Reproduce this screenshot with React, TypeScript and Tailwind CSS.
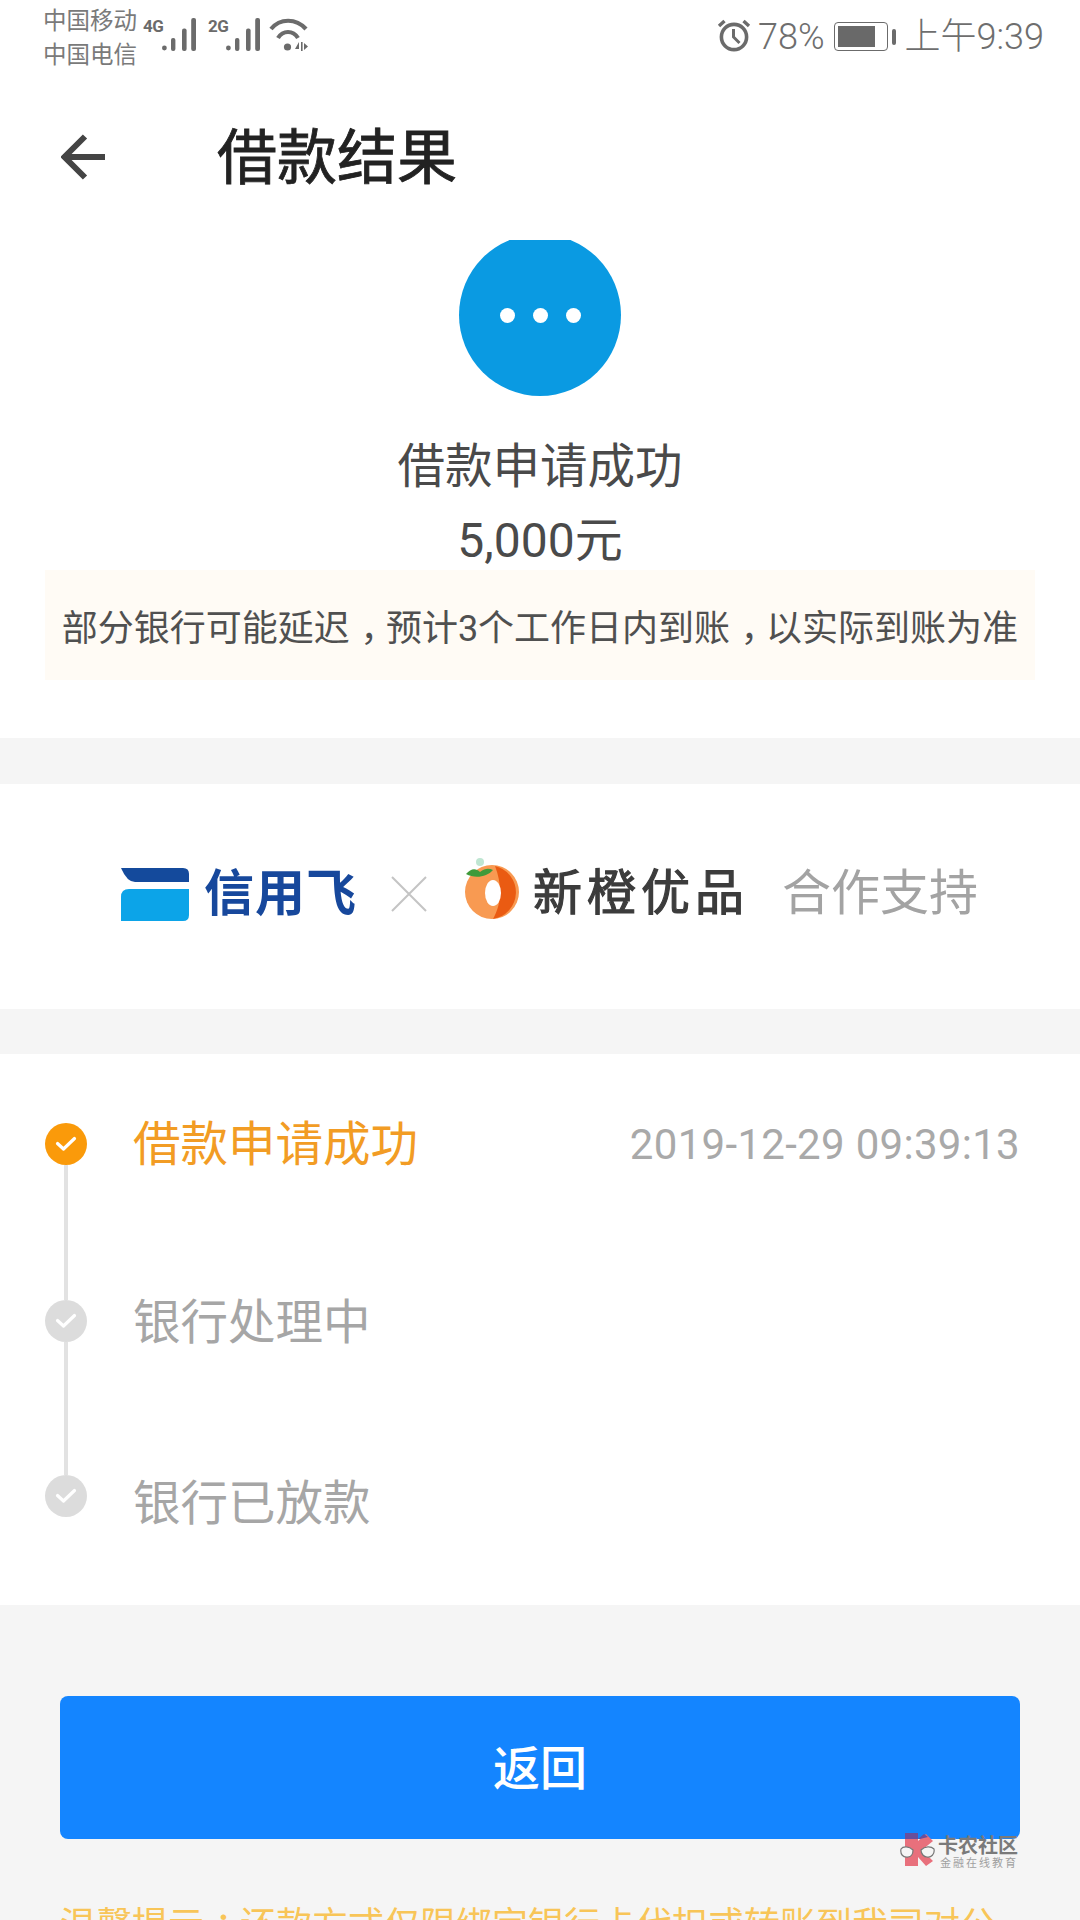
const cjk = "font-['Roboto','Noto_Sans_CJK_SC',sans-serif]";

function Bars() {
  return (
    <svg width="34" height="34" viewBox="0 0 34 34" fill="#6b6b6b">
      <circle cx="2.4" cy="30" r="2.4" />
      <rect x="9" y="20" width="4.4" height="13" rx="2" />
      <rect x="20" y="10.5" width="4.6" height="22.5" rx="2" />
      <rect x="29.2" y="0" width="4.8" height="33" rx="2" />
    </svg>
  );
}

function Wifi() {
  return (
    <svg width="40" height="34" viewBox="0 0 40 34" fill="none" stroke="#6b6b6b" strokeWidth="4.2">
      <path d="M2 11C11 0 27 0 37 11" />
      <path d="M9 20C14 12 24 12 29 20" />
      <circle cx="18.5" cy="29" r="3.6" fill="#6b6b6b" stroke="none" />
      <path d="M30 24L26 31H30V24ZM32 24V33H33.6V24ZM35 25L39 28.5L35 32Z" fill="#6b6b6b" stroke="none" />
    </svg>
  );
}

function Alarm() {
  return (
    <svg width="34" height="33" viewBox="0 0 33 33" fill="none" stroke="#6b6b6b">
      <circle cx="16.5" cy="18" r="12.6" strokeWidth="3.6" />
      <path d="M16 10V18L22 24" strokeWidth="3" />
      <path d="M1.5 7L7 2M31.5 7L26 2" strokeWidth="3.4" />
    </svg>
  );
}

function Battery() {
  return (
    <div className="flex items-center gap-[4px]">
      <div className="w-[54px] h-[29px] rounded-[4px] border-[1.5px] border-[#6b6b6b] p-[3px]">
        <div className="h-full w-[37px] bg-[#696969]" />
      </div>
      <div className="w-[4px] h-[16px] rounded-[2px] bg-[#6b6b6b]" />
    </div>
  );
}

function Check() {
  return (
    <svg width="22" height="16" viewBox="0 0 22 16" fill="none" stroke="#fff" strokeWidth="3.2">
      <path d="M2.5 7.5L8.5 13L19.5 2.5" strokeLinejoin="round" strokeLinecap="round" />
    </svg>
  );
}

function Step({ title, active, last, h, date, textCls }: { title: string; active?: boolean; last?: boolean; h: string; date?: string; textCls: string }) {
  return (
    <div className={`flex ${h}`}>
      <div className="w-[42px] flex flex-col items-center shrink-0">
        <div className={`w-[42px] h-[42px] shrink-0 rounded-full flex items-center justify-center ${active ? "bg-[#fa9a0a]" : "bg-[#dcdcdc]"}`}>
          <Check />
        </div>
        {!last && <div className="w-[4px] flex-1 bg-[#e2e2e2]" />}
      </div>
      <div className="ml-[46px] flex-1 flex justify-between">
        <span className={`text-[47.5px] leading-[42px] ${textCls} ${active ? "text-[#f29c24]" : "text-[#a6a6a6]"}`}>{title}</span>
        {date && <span className="mt-[1px] text-[42px] leading-[42px] text-[#a9a9a9] tracking-[0.3px]">{date}</span>}
      </div>
    </div>
  );
}

const punct = "inline-block w-[36px] pl-[3px] text-center [font-feature-settings:'halt']";

export default function App() {
  return (
    <div className={`relative w-[1080px] h-[1920px] overflow-hidden bg-[#f5f5f5] ${cjk}`}>
      {/* status bar */}
      <div className="bg-white h-[80px] flex justify-between pl-[43px] pr-[36px]">
        <div className="flex">
          <div className="pt-[4px] text-[23.5px] leading-[34px] text-[#7a7a7a] w-[94px]">
            <div>中国移动</div>
            <div>中国电信</div>
          </div>
          <div className="flex pt-[18px] ml-[6px] h-[54px]">
            <span className="text-[17px] leading-[16px] font-bold text-[#6b6b6b] w-[19px] tracking-[-0.5px]">4G</span>
            <Bars />
            <span className="ml-[12px] text-[17px] leading-[16px] font-bold text-[#6b6b6b] w-[18px] tracking-[-0.5px]">2G</span>
            <Bars />
            <div className="ml-[9px]"><Wifi /></div>
          </div>
        </div>
        <div className="flex items-start pt-[19px] text-[36px] leading-[36px] text-[#6e6e6e] font-light">
          <Alarm />
          <span className="ml-[7px]">78%</span>
          <div className="ml-[9px] mt-[3px]"><Battery /></div>
          <span className="ml-[9px]">上午9:39</span>
        </div>
      </div>

      {/* header */}
      <div className="bg-white h-[160px] flex items-start pl-[61px] pt-[54px]">
        <svg width="44" height="46" viewBox="0 0 44 46" fill="none" stroke="#444" strokeWidth="6" className="shrink-0">
          <path d="M44 23H4M24 2.5L3.5 23L24 43.5" />
        </svg>
        <span className="ml-[112px] -mt-[5px] text-[60px] leading-[60px] text-[#222] [-webkit-text-stroke:0.8px_#222]">借款结果</span>
      </div>

      {/* result */}
      <div className="bg-white h-[498px] overflow-hidden flex flex-col items-center">
        <div className="-mt-[6px] w-[162px] h-[162px] shrink-0 rounded-full bg-[#0a9ae2] flex items-center justify-center gap-[18px]">
          <i className="block w-[15px] h-[15px] rounded-full bg-white" />
          <i className="block w-[15px] h-[15px] rounded-full bg-white" />
          <i className="block w-[15px] h-[15px] rounded-full bg-white" />
        </div>
        <div className="mt-[41px] text-[47.5px] leading-[60px] text-[#4a4a4a]">借款申请成功</div>
        <div className="mt-[14px] text-[48px] leading-[60px] text-[#4a4a4a]">5,000元</div>
        <div className="-mt-[1px] w-[990px] h-[110px] bg-[#fffbf5] flex items-center justify-center pt-[8px] text-[36px] text-[#505050] whitespace-nowrap">
          <span>部分银行可能延迟<span className={punct}>，</span>预计3个工作日内到账<span className={punct}>，</span>以实际到账为准</span>
        </div>
      </div>

      {/* partners */}
      <div className="mt-[46px] bg-white h-[225px] flex items-center pl-[121px] pb-[6px] whitespace-nowrap">
        <svg width="68" height="54" viewBox="0 0 68 54" className="shrink-0">
          <path d="M0 1H62Q68 1 68 7V15H14Q6 15 0 1Z" fill="#144a9c" />
          <path d="M8 22H68V48Q68 54 62 54H0V30Q0 22 8 22Z" fill="#0ca4e8" />
        </svg>
        <span className="ml-[15px] text-[50px] leading-[56px] font-bold text-[#17489c] tracking-[1px]">信用飞</span>
        <svg width="38" height="38" viewBox="0 0 38 38" fill="none" stroke="#c4c4c4" strokeWidth="2" className="ml-[33px] shrink-0">
          <path d="M2 2L36 36M36 2L2 36" />
        </svg>
        <svg width="58" height="62" viewBox="0 0 58 62" className="ml-[35px] -mt-[12px] shrink-0">
          <circle cx="29" cy="35" r="27" fill="#f89a52" />
          <path d="M32 9A27 27 0 0 1 30 62C38 48 40 30 32 9Z" fill="#ea5b12" />
          <ellipse cx="30" cy="36" rx="8" ry="13" fill="#fff" />
          <path d="M3 17C8 11 13 11 17 15C22 11 26 11 30 13C24 20 12 22 3 17Z" fill="#3f9a3a" />
          <circle cx="17" cy="5" r="4" fill="#bfe6d2" />
        </svg>
        <span className="ml-[12px] text-[49px] leading-[56px] tracking-[5px] text-[#3c3c3c] [-webkit-text-stroke:1.2px_#3c3c3c]">新橙优品</span>
        <span className="ml-[33px] text-[49px] leading-[56px] text-[#a3a3a3]">合作支持</span>
      </div>

      {/* progress */}
      <div className="mt-[45px] bg-white h-[551px] pt-[69px] pl-[45px] pr-[60px]">
        <Step title="借款申请成功" active h="h-[177px]" date="2019-12-29 09:39:13" textCls="mt-[1px]" />
        <Step title="银行处理中" h="h-[175px]" textCls="mt-[2px]" />
        <Step title="银行已放款" last h="h-[42px]" textCls="mt-[8px]" />
      </div>

      {/* action */}
      <button className={`mt-[91px] mx-[60px] block w-[960px] h-[143px] rounded-[8px] bg-[#1485ff] pt-[3px] text-white text-[47px] font-medium ${cjk}`}>
        返回
      </button>
      <div className="mt-[63px] px-[60px] text-[36px] leading-[48px] text-[#f8c558] whitespace-nowrap">
        温馨提示<span className={punct}>：</span>还款方式仅限绑定银行卡代扣或转账到我司对公
      </div>

      {/* watermark */}
      <div className="absolute left-[900px] top-[1833px] flex items-start">
        <svg width="36" height="34" viewBox="0 0 36 34" className="shrink-0">
          <path d="M5 5H18V8L26 1L33 8L22 17L33 28L26 33L18 24V33H5Z" fill="#e8707c" />
          <path d="M5 0H18V6H5ZM18 6L24 1L28 4L20 6Z" fill="#6a4f9c" />
          <path d="M13 17C9 13 3 13 1 16C0 21 3 25 8 24C11 24 13 21 13 17ZM21 17C25 13 31 13 34 16C35 21 31 25 27 24C24 24 21 21 21 17Z" fill="#f5f5f5" stroke="#777" strokeWidth="1.2" />
        </svg>
        <div className="ml-[2px] flex flex-col">
          <span className="text-[20px] leading-[20px] mt-[3px] font-bold text-[#7a7a7a]">卡农社区</span>
          <span className="ml-[2px] mt-[1px] text-[11px] leading-[13px] tracking-[2px] text-[#a0a0a0]">金融在线教育</span>
        </div>
      </div>
    </div>
  );
}
